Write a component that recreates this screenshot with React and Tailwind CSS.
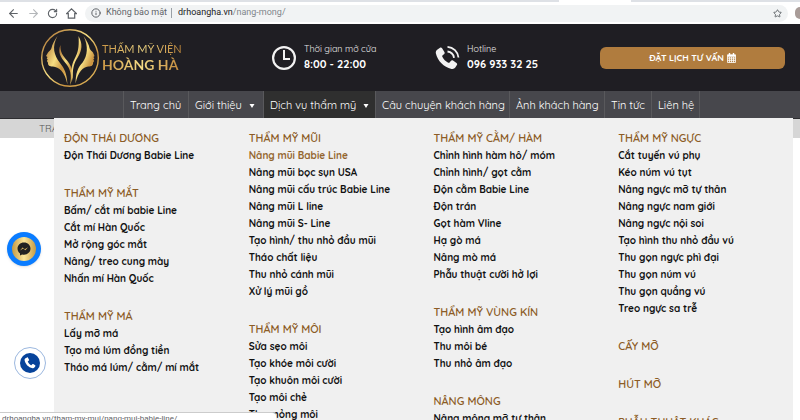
import React from 'react';
import clsx from 'clsx';
import { ArrowLeft, ArrowRight, Info, RotateCw, Star } from 'lucide-react';

const NAV = [
  { label: 'Trang chủ', width: 'w-[65px]' },
  { label: 'Giới thiệu', width: 'w-[75px]', arrow: true },
  { label: 'Dịch vụ thẩm mỹ', width: 'w-[112px]', arrow: true, active: true },
  { label: 'Câu chuyện khách hàng', width: 'w-[134px]' },
  { label: 'Ảnh khách hàng', width: 'w-[95px]' },
  { label: 'Tin tức', width: 'w-[47px]' },
  { label: 'Liên hệ', width: 'w-[49px]' },
];

const MENU = [
  [
    { title: 'ĐỘN THÁI DƯƠNG', items: ['Độn Thái Dương Babie Line'] },
    {
      title: 'THẨM MỸ MẮT',
      items: ['Bấm/ cắt mí babie Line', 'Cắt mí Hàn Quốc', 'Mở rộng góc mắt', 'Nâng/ treo cung mày', 'Nhấn mí Hàn Quốc'],
    },
    { title: 'THẨM MỸ MÁ', items: ['Lấy mỡ má', 'Tạo má lúm đồng tiền', 'Tháo má lúm/ cằm/ mí mắt'] },
  ],
  [
    {
      title: 'THẨM MỸ MŨI',
      items: [
        'Nâng mũi Babie Line',
        'Nâng mũi bọc sụn USA',
        'Nâng mũi cấu trúc Babie Line',
        'Nâng mũi L line',
        'Nâng mũi S- Line',
        'Tạo hình/ thu nhỏ đầu mũi',
        'Tháo chất liệu',
        'Thu nhỏ cánh mũi',
        'Xử lý mũi gồ',
      ],
    },
    { title: 'THẨM MỸ MÔI', items: ['Sửa sẹo môi', 'Tạo khóe môi cười', 'Tạo khuôn môi cười', 'Tạo môi chẻ', 'Thu mỏng môi'] },
  ],
  [
    {
      title: 'THẨM MỸ CẰM/ HÀM',
      items: [
        'Chỉnh hình hàm hô/ móm',
        'Chỉnh hình/ gọt cằm',
        'Độn cằm Babie Line',
        'Độn trán',
        'Gọt hàm Vline',
        'Hạ gò má',
        'Nâng mò má',
        'Phẫu thuật cười hở lợi',
      ],
    },
    { title: 'THẨM MỸ VÙNG KÍN', items: ['Tạo hình âm đạo', 'Thu môi bé', 'Thu nhỏ âm đạo'] },
    { title: 'NÂNG MÔNG', items: ['Nâng mông mỡ tự thân'] },
  ],
  [
    {
      title: 'THẨM MỸ NGỰC',
      items: [
        'Cắt tuyến vú phụ',
        'Kéo núm vú tụt',
        'Nâng ngực mỡ tự thân',
        'Nâng ngực nam giới',
        'Nâng ngực nội soi',
        'Tạo hình thu nhỏ đầu vú',
        'Thu gọn ngực phì đại',
        'Thu gọn núm vú',
        'Thu gọn quầng vú',
        'Treo ngực sa trễ',
      ],
    },
    { title: 'CẤY MỠ', items: [] },
    { title: 'HÚT MỠ', items: [] },
    { title: 'PHẪU THUẬT KHÁC', items: [] },
  ],
];

const HOVERED = 'Nâng mũi Babie Line';

const PHONE_PATH =
  'M3.2 2.6 6 .8c.7-.4 1.5-.2 1.9.5l2.3 4c.4.7.2 1.5-.4 1.9L8 8.500c-.4.3-.5.8-.3 1.200 1.300 2.800 3.500 5.100 6.300 6.600.4.2.9.1 1.200-.3l1.400-1.700c.5-.6 1.300-.7 1.900-.3l3.800 2.500c.6.4.8 1.200.4 1.900l-1.900 2.700c-.8 1.200-2.300 1.700-3.700 1.300C8.700 20.500 2.800 14.300 1.200 6.400.9 4.900 1.700 3.400 3.200 2.600Z';

function BrowserBar() {
  return (
    <div className="bg-white font-['Roboto','Noto_Sans',sans-serif]">
      <div className="flex h-[2px]">
        <div className="flex-1 bg-[#dee1e6]" />
        <div className="w-[72px] bg-white" />
        <div className="w-[169px] bg-[#dee1e6]" />
      </div>
      <div className="flex h-[22px] items-center pl-[7px] text-[#5f6368]">
        <button aria-label="Quay lại" className="mr-[7px]"><ArrowLeft size={13} /></button>
        <button aria-label="Tiến" className="mr-[7px] text-[#b4b7ba]"><ArrowRight size={13} /></button>
        <button aria-label="Tải lại" className="mr-[8px]"><RotateCw size={11} strokeWidth={2.400} /></button>
        <button aria-label="Trang chủ trình duyệt" className="mr-[8px]">
          <svg width="11" height="11" viewBox="0 0 11 11" fill="none" stroke="currentColor" strokeWidth="1.200">
            <path d="M.6 5.600 5.500.9l4.900 4.700H8.700v4.500H2.300V5.600Z" />
          </svg>
        </button>
        <div className="flex h-[17px] flex-1 items-center rounded-full bg-[#f1f3f4] pl-[6px] pr-[6px] text-[9px]">
          <Info size={10} strokeWidth={2.400} className="mr-[5px]" />
          <span className="whitespace-nowrap">Không bảo mật</span>
          <span className="ml-[4px] mr-[3px] h-[10px] w-px bg-[#9aa0a6]" />
          <span className="flex-1 pl-[3px] text-[#80868b]">
            <span className="text-[#202124]">drhoangha.vn</span>/nang-mong/
          </span>
          <button aria-label="Đánh dấu trang"><Star size={9} strokeWidth={2.400} /></button>
        </div>
        <span className="ml-[7px] h-[12px] w-[5px] rounded-l-full bg-[#a99c98]" />
      </div>
    </div>
  );
}

function Logo() {
  return (
    <a href="#" className="flex w-[231px] items-center">
      <svg width="60" height="60" viewBox="0 0 60 60" className="shrink-0">
        <defs>
          <linearGradient id="gold" x1="0" y1="0" x2="1" y2="1">
            <stop offset="0" stopColor="#a5672a" />
            <stop offset="0.450" stopColor="#f7df83" />
            <stop offset="0.700" stopColor="#c99340" />
            <stop offset="1" stopColor="#e9c566" />
          </linearGradient>
        </defs>
        <circle cx="30" cy="30" r="28.300" fill="none" stroke="url(#gold)" strokeWidth="1.400" />
        <g fill="url(#gold)">
          <path d="M17.500 8C14 13 12 17 11.500 20c-.3 2-2.500 3-3.500 4.500L6 28l1.500 1-.8 1.500 1 1-.8 1.500 1 1.500c0 3 1.500 4 5 4 6 .5 12 5 14.500 18C27 45 24 40 20 35c-6-8-8.500-16-2.500-27Z" />
          <path d="M20.500 17c-3 7 0 12 5 18 5 6 6.500 12 4.500 22 4.500-9 2.500-18-2.500-24-5-6-7.500-9-7-16Z" />
          <path d="M43.500 8c3.500 5 5.500 9 6 12 .3 2 2.500 3 3.500 4.500L54.500 28l-1 1 .8 1.500-1 1 .8 1.500-1 1.500c0 3-1.500 4-5 4-5 .5-10 5-12.500 17 0-10 2-16 7-21 5-7 6-16 .9-26.500Z" />
          <path d="M38.500 8c4.500 8 3.500 14-.5 21-4 6-6 12-5 24-3.500-12-.5-18 2.500-24 3.500-7 3.500-13 3-21Z" />
        </g>
      </svg>
      <span className="ml-[2px] whitespace-nowrap bg-gradient-to-r from-[#c99645] via-[#f5dc86] to-[#bd8438] bg-clip-text font-['Lato','Noto_Sans',sans-serif] text-transparent">
        <span className="block text-[11px] leading-[14px]">THẨM MỸ VIỆN</span>
        <span className="block text-[14px] font-bold leading-[17px]">HOÀNG HÀ</span>
      </span>
    </a>
  );
}

function Contact({ icon, label, value, className }) {
  return (
    <div className={clsx('flex items-center whitespace-nowrap text-white', className)}>
      {icon}
      <div className="ml-[7px]">
        <p className="text-[9px] leading-[14px] text-[#e6e6e6]">{label}</p>
        <p className="text-[11px] font-bold leading-[17px]">{value}</p>
      </div>
    </div>
  );
}

function Header() {
  return (
    <header className="flex h-[67px] items-center bg-[#1f1e23] pl-[40px] pr-[15px]">
      <Logo />
      <Contact
        className="w-[164px]"
        label="Thời gian mở cửa"
        value="8:00 - 22:00"
        icon={
          <svg width="26" height="26" viewBox="0 0 26 26" fill="none" stroke="#f2f2f2" strokeWidth="2.200">
            <circle cx="13" cy="13" r="10.900" />
            <path d="M13 5v9h6" strokeWidth="2" />
          </svg>
        }
      />
      <Contact
        label="Hotline"
        value="096 933 32 25"
        icon={
          <svg width="25" height="26" viewBox="0 0 25 26" fill="none" stroke="#f2f2f2" strokeWidth="1.800">
            <path d="M2.500 4.500 5 2.800c.8-.5 1.600-.3 2.100.5L9.400 7c.5.800.3 1.700-.4 2.200L7.600 10.300c-.4.400-.5.900-.3 1.400 1.200 2.500 3.300 4.700 5.900 6 .5.300 1 .2 1.400-.3l1.200-1.500c.6-.7 1.500-.8 2.200-.3l3.500 2.400c.7.500.9 1.300.4 2.100l-1.600 2.500c-.8 1.200-2.300 1.700-3.800 1.300C8.700 22 2.700 16.200.9 8.600.5 7 1.100 5.400 2.500 4.500Z" fill="#f2f2f2" stroke="none" />
            <path d="M12.500 1.800c5.800.4 10.400 4.900 11 10.700M12.500 6.500c3.400.4 6 3 6.500 6.300" />
          </svg>
        }
      />
      <button className="ml-auto flex h-[22px] w-[185px] items-center justify-center gap-[3px] rounded-[6px] bg-[#b07c3e] text-[9px] font-bold text-white">
        ĐẶT LỊCH TƯ VẤN
        <svg width="9" height="10" viewBox="0 0 9 10" fill="none" stroke="#fff" strokeWidth="0.800">
          <path d="M.5 1.800h8v7.700h-8ZM.5 4h8M.5 5.800h8M.5 7.600h8M2.500 4v5.500M4.500 4v5.500M6.500 4v5.500" />
          <path d="M.5 2.700h8" strokeWidth="1.800" />
          <path d="M2.500 0v2.500M6.500 0v2.500" strokeWidth="1.400" />
        </svg>
      </button>
    </header>
  );
}

function MegaMenu() {
  return (
    <div className="absolute left-[54px] right-[7px] top-full grid grid-cols-4 bg-[#f0f0f0] pb-[20px] pt-[11px]">
      {MENU.map((column, i) => (
        <div key={i} className="flex flex-col gap-[20px] whitespace-nowrap pl-[10px]">
          {column.map((group) => (
            <section key={group.title}>
              <h3 className="text-[11px] font-semibold leading-[18px] text-[#8c5c26]">
                <a href="#">{group.title}</a>
              </h3>
              <ul className="text-[10px] font-bold leading-[17px] text-[#111]">
                {group.items.map((item) => (
                  <li key={item}>
                    <a href="#" className={clsx(item === HOVERED && 'text-[#94662f]')}>{item}</a>
                  </li>
                ))}
              </ul>
            </section>
          ))}
        </div>
      ))}
    </div>
  );
}

function NavBar() {
  return (
    <nav className="relative z-10 border-b border-[#2d2d30] bg-[#47474c]">
      <ul className="flex h-[27px] pl-[123px]">
        {NAV.map((item) => (
          <li
            key={item.label}
            className={clsx(
              'shrink-0 border-l border-[#59595c] last:border-r',
              item.width,
              item.active && 'bg-[#2f2f2f]',
            )}
          >
            <a href="#" className="flex h-full items-center gap-[7px] whitespace-nowrap pl-[6px] pt-[2px] text-[11px] text-white">
              {item.label}
              {item.arrow && (
                <svg width="6" height="4" viewBox="0 0 6 4" fill="#fff">
                  <path d="M.5 0h5L3 4Z" />
                </svg>
              )}
            </a>
          </li>
        ))}
      </ul>
      <MegaMenu />
    </nav>
  );
}

export default function App() {
  return (
    <div className="relative h-screen overflow-hidden bg-white font-['Quicksand','Lato','Noto_Sans',sans-serif]">
      <BrowserBar />
      <Header />
      <NavBar />
      <div className="h-[19px] bg-[#d6d6d6] pl-[39px] text-[10px] leading-[19px] text-[#555]">TRANG CHỦ</div>

      <button
        aria-label="Messenger"
        className="absolute left-[7px] top-[232px] flex size-[34px] items-center justify-center rounded-full bg-[#0a7cff] shadow"
      >
        <span className="flex size-[24px] items-center justify-center rounded-full bg-gradient-to-r from-[#c49a43] via-[#fbe69a] to-[#c49a43]">
          <svg width="14" height="14" viewBox="0 0 14 14">
            <path d="M7 .5c3.800 0 6.500 2.700 6.500 6.100S10.800 12.700 7 12.700c-.7 0-1.300-.1-1.900-.3L3 13.500v-2C1.400 10.400.5 8.700.5 6.600.5 3.200 3.200.5 7 .5Z" fill="#222" />
            <path d="m3 8.400 2.600-3 2.200 1.800L11 5.300 8.400 8.300 6.200 6.600Z" fill="#e2bd62" />
          </svg>
        </span>
      </button>
      <button
        aria-label="Gọi điện"
        className="absolute left-[14px] top-[347px] flex size-[32px] items-center justify-center rounded-full border border-[#9cb8df] bg-white"
      >
        <span className="flex size-[20px] items-center justify-center rounded-full bg-[#06439b]">
          <svg width="12" height="12" viewBox="0 0 24 24" fill="#fff">
            <path d={PHONE_PATH} />
          </svg>
        </span>
      </button>
      <div className="absolute bottom-0 left-0 z-20 h-[8px] w-[276px] max-w-full overflow-hidden rounded-tr-sm border-t border-[#ccc] bg-white pl-[2px] font-['Roboto','Noto_Sans',sans-serif] text-[8px] leading-[12px] text-[#5f6368]">
        drhoangha.vn/tham-my-mui/nang-mui-babie-line/
      </div>
    </div>
  );
}
